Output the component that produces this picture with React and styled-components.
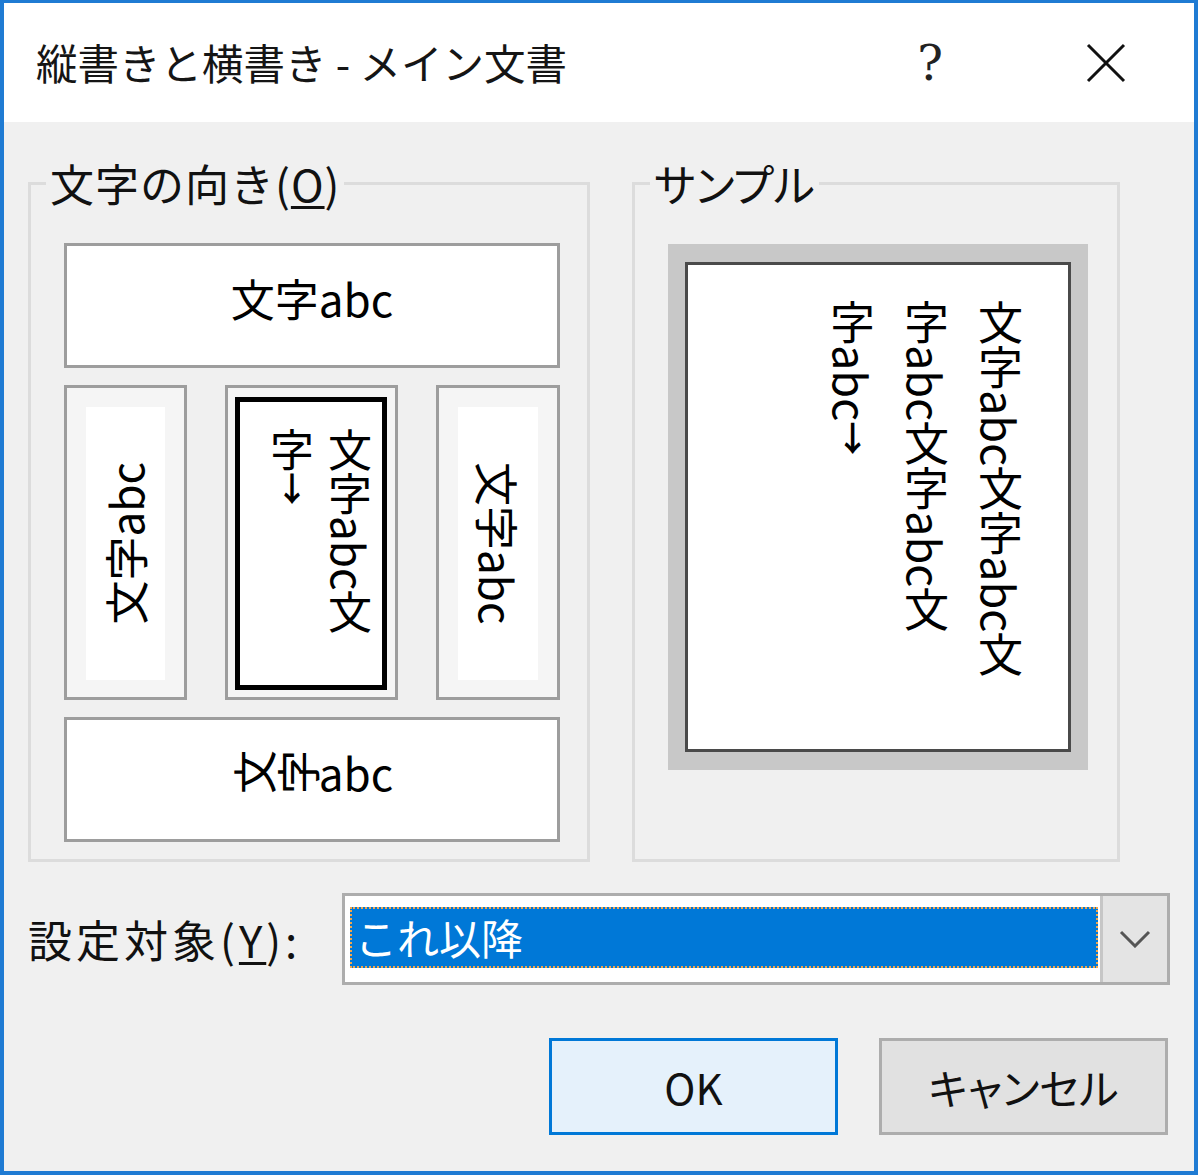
import React from "react";
import styled, { createGlobalStyle } from "styled-components";

const Global = createGlobalStyle`
  html, body { margin: 0; padding: 0; background: #ffffff; }
  body { font-family: "Noto Sans CJK JP", "Noto Sans", sans-serif; color: #000; }
  #root { width: 1200px; height: 1176px; }
`;

const Window = styled.div`
  box-sizing: border-box;
  width: 1198px;
  height: 1175px;
  border-style: solid;
  border-color: #1f7bd3;
  border-width: 3px 4px 4px 4px;
  background: #f0f0f0;
  display: flex;
  flex-direction: column;
`;

const TitleBar = styled.div`
  flex: none;
  height: 119px;
  background: #ffffff;
  display: flex;
  align-items: center;
`;

const TitleText = styled.div`
  flex: 1;
  padding-left: 32px;
  font-size: 41.5px;
  line-height: 1;
  color: #151515;
  white-space: nowrap;
`;

const CaptionButton = styled.div`
  width: 176px;
  height: 100%;
  display: flex;
  align-items: center;
  justify-content: center;
  font-family: "DejaVu Serif", "Liberation Serif", serif;
  font-size: 48px;
  color: #222;
`;

const Content = styled.div`
  flex: 1;
  padding: 36px 24px 0 24px;
  display: flex;
  flex-direction: column;
`;

const GroupRow = styled.div`
  display: flex;
  gap: 42px;
`;

const Group = styled.fieldset`
  box-sizing: border-box;
  width: ${(p) => p.$w}px;
  min-width: 0;
  margin: 0;
  padding: 0;
  border: 3px solid #dcdcdc;
  display: flex;
  flex-direction: column;
`;

const Legend = styled.legend`
  margin-left: 15px;
  padding: 0 4px;
  font-size: 44px;
  line-height: 50px;
  color: #111;
  letter-spacing: ${(p) => (p.$palt ? "0" : "1px")};
  ${(p) => (p.$palt ? 'font-feature-settings: "palt";' : "")}
`;

const U = styled.span`
  text-decoration: underline;
  text-decoration-thickness: 3px;
  text-underline-offset: 4px;
`;

const OrientBody = styled.div`
  flex: 1;
  padding: 35px 27px 17px 33px;
  display: flex;
  flex-direction: column;
  gap: 17px;
`;

const WideChoice = styled.div`
  box-sizing: border-box;
  height: 125px;
  border: 3px solid #9d9d9d;
  background: #ffffff;
  padding-bottom: 16px;
  display: flex;
  align-items: center;
  justify-content: center;
  font-size: 44px;
  line-height: 1;
  white-space: nowrap;
`;

const Turned = styled.span`
  display: inline-block;
  transform: rotate(-90deg);
`;

const ChoiceRow = styled.div`
  height: 315px;
  display: flex;
  justify-content: space-between;
`;

const SideChoice = styled.div`
  box-sizing: border-box;
  width: ${(p) => p.$w}px;
  border: 3px solid #9d9d9d;
  background: #f5f5f5;
  padding: 19px 19px 17px 19px;
  display: flex;
`;

const SideInner = styled.div`
  flex: 1;
  background: #ffffff;
  display: flex;
  align-items: center;
  justify-content: center;
`;

const SideText = styled.div`
  writing-mode: vertical-rl;
  text-orientation: sideways;
  font-size: 44px;
  line-height: 1.2;
  white-space: nowrap;
  transform: ${(p) => (p.$flip ? "rotate(180deg)" : "none")};
`;

const SelectedChoice = styled.div`
  box-sizing: border-box;
  width: 173px;
  border: 3px solid #9d9d9d;
  background: #f5f5f5;
  padding: 9px 8px 7px 7px;
  display: flex;
`;

const SelectedFrame = styled.div`
  flex: 1;
  border: 5px solid #000;
  background: #ffffff;
  padding: 26px 3px 0 0;
  display: flex;
  justify-content: flex-end;
`;

const VText = styled.div`
  writing-mode: vertical-rl;
  font-size: ${(p) => p.$size}px;
  line-height: ${(p) => p.$lh}px;
  white-space: nowrap;
  height: 100%;
`;

const Ret = styled.span`
  font-size: 0.75em;
  text-orientation: upright;
  font-weight: bold;
`;

const SampleBody = styled.div`
  flex: 1;
  padding: 36px 29px 0 33px;
`;

const Paper = styled.div`
  box-sizing: border-box;
  height: 526px;
  background: #c8c8c8;
  padding: 18px 17px;
`;

const Sheet = styled.div`
  box-sizing: border-box;
  height: 100%;
  border: 3px solid #4a4a4a;
  background: #ffffff;
  padding: 35px 31px 0 0;
  display: flex;
  justify-content: flex-end;
`;

const FieldRow = styled.div`
  margin-top: 31px;
  height: 92px;
  display: flex;
  align-items: center;
`;

const FieldLabel = styled.div`
  flex: none;
  width: 314px;
  font-size: 44px;
  letter-spacing: 4px;
  line-height: 1;
  color: #111;
  white-space: nowrap;
`;

const Combo = styled.div`
  box-sizing: border-box;
  width: 828px;
  height: 92px;
  border: 3px solid #adadad;
  background: #ffffff;
  display: flex;
`;

const ComboField = styled.div`
  flex: 1;
  padding: 11px 2px 14px 5px;
  display: flex;
`;

const Selection = styled.div`
  flex: 1;
  box-sizing: border-box;
  background: #0078d7;
  border: 2px dotted #f3a64a;
  color: #ffffff;
  font-size: 42px;
  line-height: 56px;
  padding-left: 3px;
  white-space: nowrap;
`;

const DropButton = styled.div`
  flex: none;
  width: 64px;
  border-left: 3px solid #c6c6c6;
  background: #e4e4e4;
  display: flex;
  align-items: center;
  justify-content: center;
`;

const ButtonRow = styled.div`
  margin-top: 53px;
  padding-right: 2px;
  display: flex;
  justify-content: flex-end;
  gap: 41px;
`;

const Button = styled.div`
  box-sizing: border-box;
  width: 289px;
  height: 97px;
  border: 3px solid ${(p) => (p.$primary ? "#0078d7" : "#adadad")};
  background: ${(p) => (p.$primary ? "#e5f1fb" : "#e1e1e1")};
  display: flex;
  align-items: center;
  justify-content: center;
  font-size: 42px;
  color: #111;
  font-feature-settings: "palt";
  white-space: nowrap;
`;

export default function App() {
  return (
    <>
      <Global />
      <Window>
        <TitleBar>
          <TitleText>縦書きと横書き - メイン文書</TitleText>
          <CaptionButton>?</CaptionButton>
          <CaptionButton>
            <svg width="40" height="40" viewBox="0 0 40 40">
              <path d="M2 2 L38 38 M38 2 L2 38" stroke="#111" strokeWidth="3" fill="none" />
            </svg>
          </CaptionButton>
        </TitleBar>
        <Content>
          <GroupRow>
            <Group $w={562}>
              <Legend>
                文字の向き(<U>O</U>)
              </Legend>
              <OrientBody>
                <WideChoice>文字abc</WideChoice>
                <ChoiceRow>
                  <SideChoice $w={123}>
                    <SideInner>
                      <SideText $flip>文字abc</SideText>
                    </SideInner>
                  </SideChoice>
                  <SelectedChoice>
                    <SelectedFrame>
                      <VText $size={44} $lh={58}>
                        文字abc文
                        <br />
                        字<Ret>↓</Ret>
                      </VText>
                    </SelectedFrame>
                  </SelectedChoice>
                  <SideChoice $w={124}>
                    <SideInner>
                      <SideText>文字abc</SideText>
                    </SideInner>
                  </SideChoice>
                </ChoiceRow>
                <WideChoice>
                  <Turned>文</Turned>
                  <Turned>字</Turned>abc
                </WideChoice>
              </OrientBody>
            </Group>
            <Group $w={488}>
              <Legend $palt>サンプル</Legend>
              <SampleBody>
                <Paper>
                  <Sheet>
                    <VText $size={45} $lh={74}>
                      文字abc文字abc文
                      <br />
                      字abc文字abc文
                      <br />
                      字abc<Ret>↓</Ret>
                    </VText>
                  </Sheet>
                </Paper>
              </SampleBody>
            </Group>
          </GroupRow>
          <FieldRow>
            <FieldLabel>
              設定対象(<U>Y</U>):
            </FieldLabel>
            <Combo>
              <ComboField>
                <Selection>これ以降</Selection>
              </ComboField>
              <DropButton>
                <svg width="32" height="18" viewBox="0 0 32 18">
                  <polyline points="2,2 16,16 30,2" stroke="#555" strokeWidth="3" fill="none" />
                </svg>
              </DropButton>
            </Combo>
          </FieldRow>
          <ButtonRow>
            <Button $primary>OK</Button>
            <Button>キャンセル</Button>
          </ButtonRow>
        </Content>
      </Window>
    </>
  );
}
